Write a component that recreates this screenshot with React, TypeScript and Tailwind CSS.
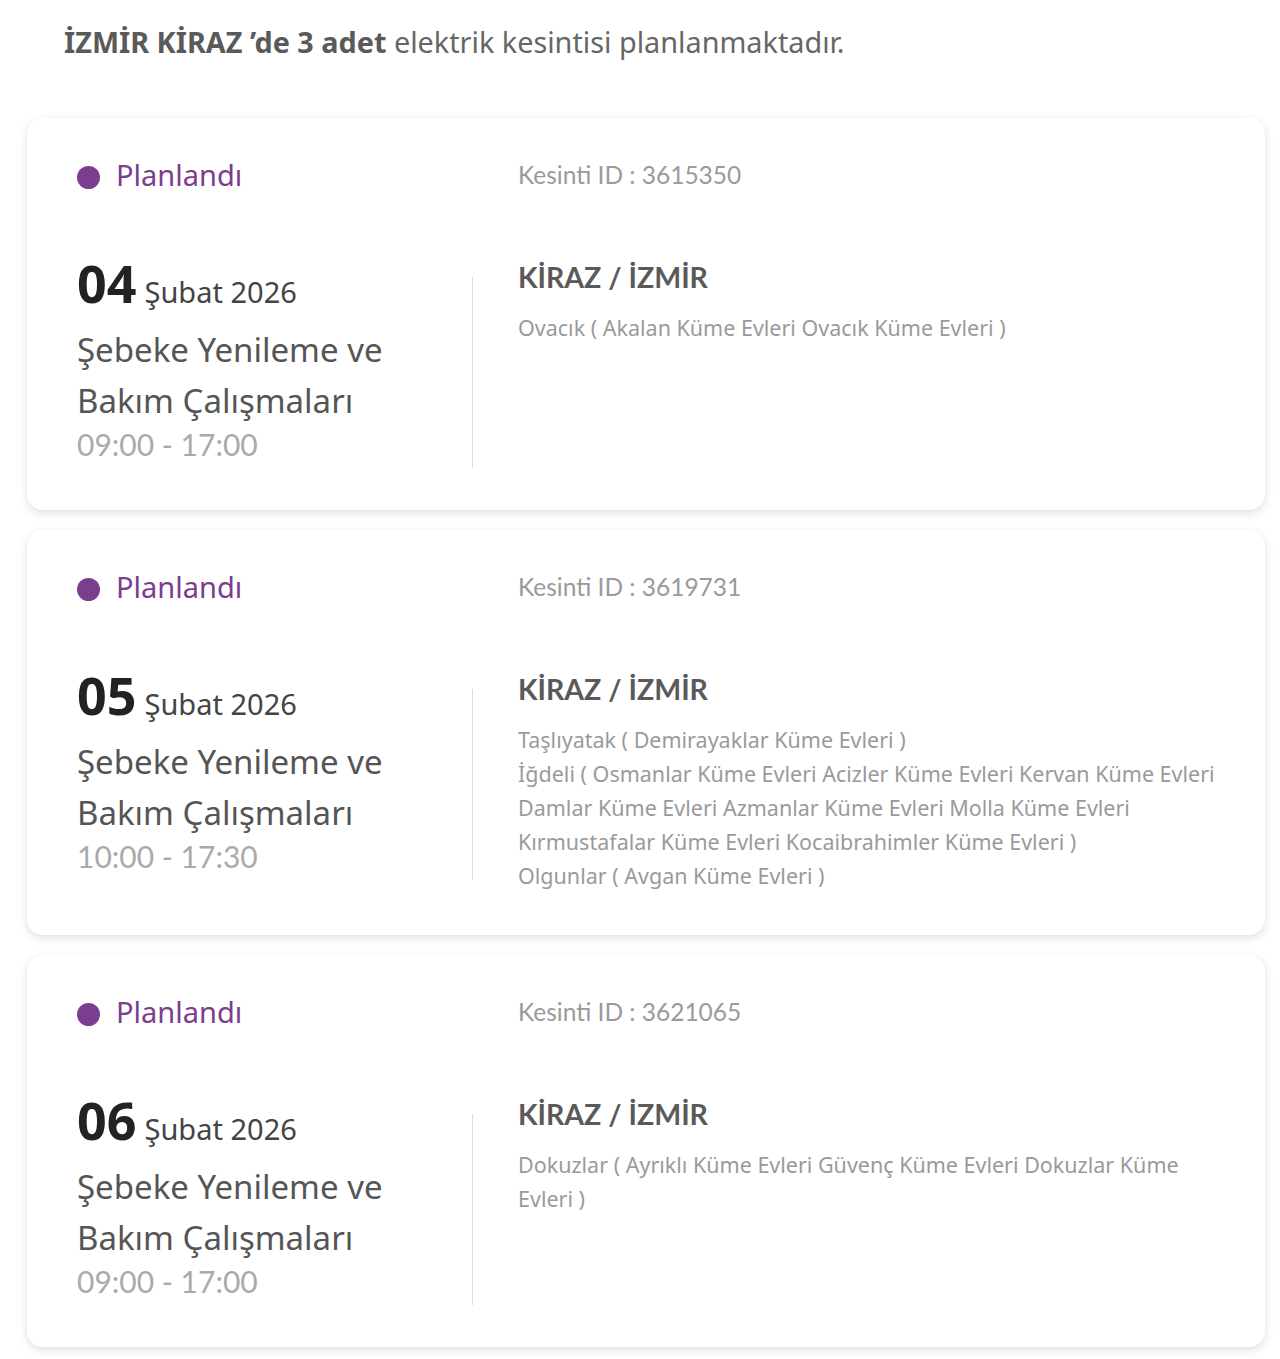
import React from 'react';

type Outage = {
  id: string;
  day: string;
  month: string;
  title: string;
  time: string;
  district: string;
  areas: string[];
};

const outages: Outage[] = [
  {
    id: '3615350',
    day: '04',
    month: 'Şubat 2026',
    title: 'Şebeke Yenileme ve Bakım Çalışmaları',
    time: '09:00 - 17:00',
    district: 'KİRAZ / İZMİR',
    areas: ['Ovacık ( Akalan Küme Evleri Ovacık Küme Evleri )'],
  },
  {
    id: '3619731',
    day: '05',
    month: 'Şubat 2026',
    title: 'Şebeke Yenileme ve Bakım Çalışmaları',
    time: '10:00 - 17:30',
    district: 'KİRAZ / İZMİR',
    areas: [
      'Taşlıyatak ( Demirayaklar Küme Evleri )',
      'İğdeli ( Osmanlar Küme Evleri Acizler Küme Evleri Kervan Küme Evleri Damlar Küme Evleri Azmanlar Küme Evleri Molla Küme Evleri Kırmustafalar Küme Evleri Kocaibrahimler Küme Evleri )',
      'Olgunlar ( Avgan Küme Evleri )',
    ],
  },
  {
    id: '3621065',
    day: '06',
    month: 'Şubat 2026',
    title: 'Şebeke Yenileme ve Bakım Çalışmaları',
    time: '09:00 - 17:00',
    district: 'KİRAZ / İZMİR',
    areas: ['Dokuzlar ( Ayrıklı Küme Evleri Güvenç Küme Evleri Dokuzlar Küme Evleri )'],
  },
];

const lato = "font-['Lato','Liberation_Sans',sans-serif]";
const noto = "font-['Noto_Sans','Open_Sans',sans-serif]";

const OutageCard: React.FC<{ item: Outage }> = ({ item }) => (
  <div className="rounded-2xl bg-white pl-[50px] pr-[40px] pt-[39px] pb-[42px] shadow-[0_3px_10px_rgba(0,0,0,0.13)]">
    <div className="grid grid-cols-[396px_1fr]">
      <div className={`flex items-center gap-4 ${noto}`}>
        <span className="mt-1 h-[23px] w-[23px] rounded-full bg-[#7b3d8e]" />
        <span className="text-[29px] leading-9 text-[#7b3d8e]">Planlandı</span>
      </div>
      <div className={`pl-[45px] text-[24.5px] leading-9 text-[#9a9a9a] ${lato}`}>
        Kesinti ID : {item.id}
      </div>
    </div>

    <div className="mt-16 grid grid-cols-[396px_1fr] items-start">
      <div className="flex">
        <div className={`flex-1 pb-[6px] ${noto}`}>
          <div className="flex items-baseline gap-2 leading-[52px]">
            <span className="text-[52px] font-bold text-[#222]">{item.day}</span>
            <span className="text-[29px] text-[#444]">{item.month}</span>
          </div>
          <div className="mt-[6px] w-[320px] text-[33px] leading-[51px] text-[#555]">{item.title}</div>
          <div className={`text-[30px] leading-9 text-[#aaa] ${lato}`}>{item.time}</div>
        </div>
        <div className="mt-5 w-px self-stretch bg-[#dcdcdc]" />
      </div>

      <div className="pl-[45px]">
        <div className={`text-[28.5px] font-bold leading-10 text-[#5a5a5a] ${lato}`}>{item.district}</div>
        <div className={`mt-[14px] text-[21.5px] leading-[34px] text-[#9a9a9a] ${noto}`}>
          {item.areas.map(a => (
            <div key={a}>{a}</div>
          ))}
        </div>
      </div>
    </div>
  </div>
);

export default function App() {
  return (
    <div className="min-h-screen bg-white pb-4">
      <h1 className={`pl-16 pt-6 text-[28.8px] leading-9 text-[#666] ${noto}`}>
        <span className="font-bold text-[#5a5a5a]">İZMİR KİRAZ ’de 3 adet</span> elektrik kesintisi planlanmaktadır.
      </h1>
      <div className="mt-[58px] flex w-[1265px] flex-col gap-5 pl-[27px]">
        {outages.map(o => (
          <OutageCard key={o.id} item={o} />
        ))}
      </div>
    </div>
  );
}
